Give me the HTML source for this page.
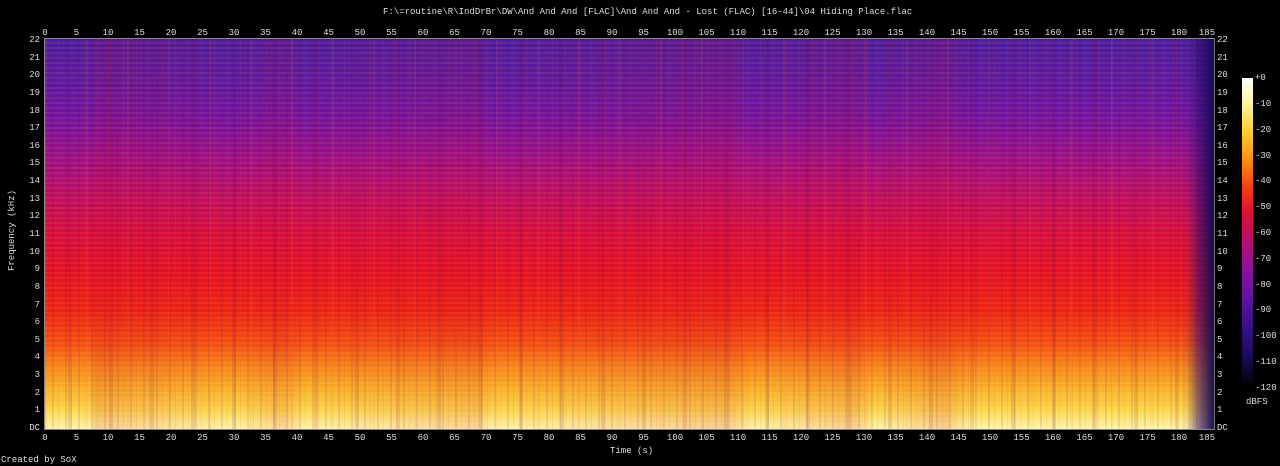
<!DOCTYPE html>
<html><head><style>
body{margin:0;background:#000;width:1280px;height:466px;overflow:hidden;position:relative;font-family:"Liberation Mono","DejaVu Sans Mono",monospace;font-size:9px;color:#ddd}
.t{position:absolute;white-space:nowrap;line-height:9px}
.xt,.xb{position:absolute;width:30px;margin-left:-15px;text-align:center}
.xt{top:28px}.xb{top:433px}
.yl{position:absolute;left:0;width:40px;text-align:right;margin-top:-5px}
.yr{position:absolute;left:1217px;margin-top:-5px}
.cb{position:absolute;left:1255px;margin-top:-5px}
#plot{position:absolute;left:44px;top:38px;width:1169px;height:390px;border:1px solid #888;border-right:1px solid #777;
background:
linear-gradient(90deg,rgba(20,10,90,0) 0,rgba(20,10,90,0) 1140px,rgba(40,10,110,.6) 1155px,rgba(15,10,80,.95) 1169px),
repeating-linear-gradient(90deg,rgba(255,60,60,.12) 0 1px,rgba(0,0,0,0) 1px 7px,rgba(80,0,120,.10) 7px 9px,rgba(0,0,0,0) 9px 13px),
repeating-linear-gradient(90deg,rgba(255,120,60,.10) 0 2px,rgba(0,0,0,0) 2px 23px,rgba(120,0,60,.12) 23px 27px,rgba(0,0,0,0) 27px 41px),
repeating-linear-gradient(0deg,rgba(255,255,150,.08) 0 2px,rgba(0,0,0,0) 2px 5px),
linear-gradient(90deg,rgba(0,0,0,0) 0,rgba(0,0,0,0) 45px,rgba(200,0,40,.15) 50px,rgba(0,0,0,0) 190px,rgba(200,0,40,.12) 240px,rgba(0,0,0,0) 260px,rgba(200,0,40,.12) 430px,rgba(0,0,0,0) 450px,rgba(200,0,40,.15) 680px,rgba(0,0,0,0) 710px,rgba(200,0,40,.15) 810px,rgba(0,0,0,0) 830px,rgba(200,0,40,.15) 900px,rgba(0,0,0,0) 925px),
linear-gradient(180deg,#4c1c9c 0%,#5c18a0 10%,#7212a0 20%,#9a0e88 30%,#be0c62 40%,#d80c3c 50%,#e61022 60%,#ee2412 70%,#f44e10 78%,#f8861a 84%,#fab42a 90%,#fcd64c 95%,#fff6b0 100%);}
#cbar{position:absolute;left:1242px;top:78px;width:11px;height:310px;background:linear-gradient(180deg,#fffffe 0%,#fff7a0 8%,#ffd030 17%,#ff8a10 27%,#f84010 35%,#e01030 43%,#b8106a 52%,#8a12a0 62%,#5e14a0 71%,#3a108a 80%,#1e0a60 89%,#000 100%)}
</style></head><body>
<div class="t" style="left:383px;top:8px">F:\=routine\R\IndDrBr\DW\And And And [FLAC]\And And And - Lost (FLAC) [16-44]\04 Hiding Place.flac</div>
<div id="plot"></div>
<div id="cbar"></div>

<div class="xt" style="left:45px">0</div><div class="xt" style="left:76.5px">5</div><div class="xt" style="left:108px">10</div><div class="xt" style="left:139.5px">15</div><div class="xt" style="left:171px">20</div><div class="xt" style="left:202.5px">25</div><div class="xt" style="left:234px">30</div><div class="xt" style="left:265.5px">35</div><div class="xt" style="left:297px">40</div><div class="xt" style="left:328.5px">45</div><div class="xt" style="left:360px">50</div><div class="xt" style="left:391.5px">55</div><div class="xt" style="left:423px">60</div><div class="xt" style="left:454.5px">65</div><div class="xt" style="left:486px">70</div><div class="xt" style="left:517.5px">75</div><div class="xt" style="left:549px">80</div><div class="xt" style="left:580.5px">85</div><div class="xt" style="left:612px">90</div><div class="xt" style="left:643.5px">95</div><div class="xt" style="left:675px">100</div><div class="xt" style="left:706.5px">105</div><div class="xt" style="left:738px">110</div><div class="xt" style="left:769.5px">115</div><div class="xt" style="left:801px">120</div><div class="xt" style="left:832.5px">125</div><div class="xt" style="left:864px">130</div><div class="xt" style="left:895.5px">135</div><div class="xt" style="left:927px">140</div><div class="xt" style="left:958.5px">145</div><div class="xt" style="left:990px">150</div><div class="xt" style="left:1021.5px">155</div><div class="xt" style="left:1053px">160</div><div class="xt" style="left:1084.5px">165</div><div class="xt" style="left:1116px">170</div><div class="xt" style="left:1147.5px">175</div><div class="xt" style="left:1179px">180</div><div class="xt" style="left:1207px">185</div>

<div class="xb" style="left:45px">0</div><div class="xb" style="left:76.5px">5</div><div class="xb" style="left:108px">10</div><div class="xb" style="left:139.5px">15</div><div class="xb" style="left:171px">20</div><div class="xb" style="left:202.5px">25</div><div class="xb" style="left:234px">30</div><div class="xb" style="left:265.5px">35</div><div class="xb" style="left:297px">40</div><div class="xb" style="left:328.5px">45</div><div class="xb" style="left:360px">50</div><div class="xb" style="left:391.5px">55</div><div class="xb" style="left:423px">60</div><div class="xb" style="left:454.5px">65</div><div class="xb" style="left:486px">70</div><div class="xb" style="left:517.5px">75</div><div class="xb" style="left:549px">80</div><div class="xb" style="left:580.5px">85</div><div class="xb" style="left:612px">90</div><div class="xb" style="left:643.5px">95</div><div class="xb" style="left:675px">100</div><div class="xb" style="left:706.5px">105</div><div class="xb" style="left:738px">110</div><div class="xb" style="left:769.5px">115</div><div class="xb" style="left:801px">120</div><div class="xb" style="left:832.5px">125</div><div class="xb" style="left:864px">130</div><div class="xb" style="left:895.5px">135</div><div class="xb" style="left:927px">140</div><div class="xb" style="left:958.5px">145</div><div class="xb" style="left:990px">150</div><div class="xb" style="left:1021.5px">155</div><div class="xb" style="left:1053px">160</div><div class="xb" style="left:1084.5px">165</div><div class="xb" style="left:1116px">170</div><div class="xb" style="left:1147.5px">175</div><div class="xb" style="left:1179px">180</div><div class="xb" style="left:1207px">185</div>

<div class="yl" style="top:428px">DC</div><div class="yl" style="top:410.4px">1</div><div class="yl" style="top:392.7px">2</div><div class="yl" style="top:375.1px">3</div><div class="yl" style="top:357.4px">4</div><div class="yl" style="top:339.8px">5</div><div class="yl" style="top:322.2px">6</div><div class="yl" style="top:304.5px">7</div><div class="yl" style="top:286.9px">8</div><div class="yl" style="top:269.2px">9</div><div class="yl" style="top:251.6px">10</div><div class="yl" style="top:234px">11</div><div class="yl" style="top:216.3px">12</div><div class="yl" style="top:198.7px">13</div><div class="yl" style="top:181px">14</div><div class="yl" style="top:163.4px">15</div><div class="yl" style="top:145.8px">16</div><div class="yl" style="top:128.1px">17</div><div class="yl" style="top:110.5px">18</div><div class="yl" style="top:92.8px">19</div><div class="yl" style="top:75.2px">20</div><div class="yl" style="top:57.6px">21</div><div class="yl" style="top:40px">22</div>

<div class="yr" style="top:428px">DC</div><div class="yr" style="top:410.4px">1</div><div class="yr" style="top:392.7px">2</div><div class="yr" style="top:375.1px">3</div><div class="yr" style="top:357.4px">4</div><div class="yr" style="top:339.8px">5</div><div class="yr" style="top:322.2px">6</div><div class="yr" style="top:304.5px">7</div><div class="yr" style="top:286.9px">8</div><div class="yr" style="top:269.2px">9</div><div class="yr" style="top:251.6px">10</div><div class="yr" style="top:234px">11</div><div class="yr" style="top:216.3px">12</div><div class="yr" style="top:198.7px">13</div><div class="yr" style="top:181px">14</div><div class="yr" style="top:163.4px">15</div><div class="yr" style="top:145.8px">16</div><div class="yr" style="top:128.1px">17</div><div class="yr" style="top:110.5px">18</div><div class="yr" style="top:92.8px">19</div><div class="yr" style="top:75.2px">20</div><div class="yr" style="top:57.6px">21</div><div class="yr" style="top:40px">22</div>

<div class="cb" style="top:78px">+0</div><div class="cb" style="top:104px">-10</div><div class="cb" style="top:130px">-20</div><div class="cb" style="top:156px">-30</div><div class="cb" style="top:181px">-40</div><div class="cb" style="top:207px">-50</div><div class="cb" style="top:233px">-60</div><div class="cb" style="top:259px">-70</div><div class="cb" style="top:285px">-80</div><div class="cb" style="top:310px">-90</div><div class="cb" style="top:336px">-100</div><div class="cb" style="top:362px">-110</div><div class="cb" style="top:388px">-120</div>
<div class="t" style="left:1246px;top:398px">dBFS</div>
<div class="t" style="left:610px;top:447px">Time (s)</div>
<div class="t" style="left:-25px;top:229px;transform:rotate(-90deg);width:75px;text-align:center">Frequency (kHz)</div>
<div class="t" style="left:1px;top:456px">Created by SoX</div>
</body></html>
